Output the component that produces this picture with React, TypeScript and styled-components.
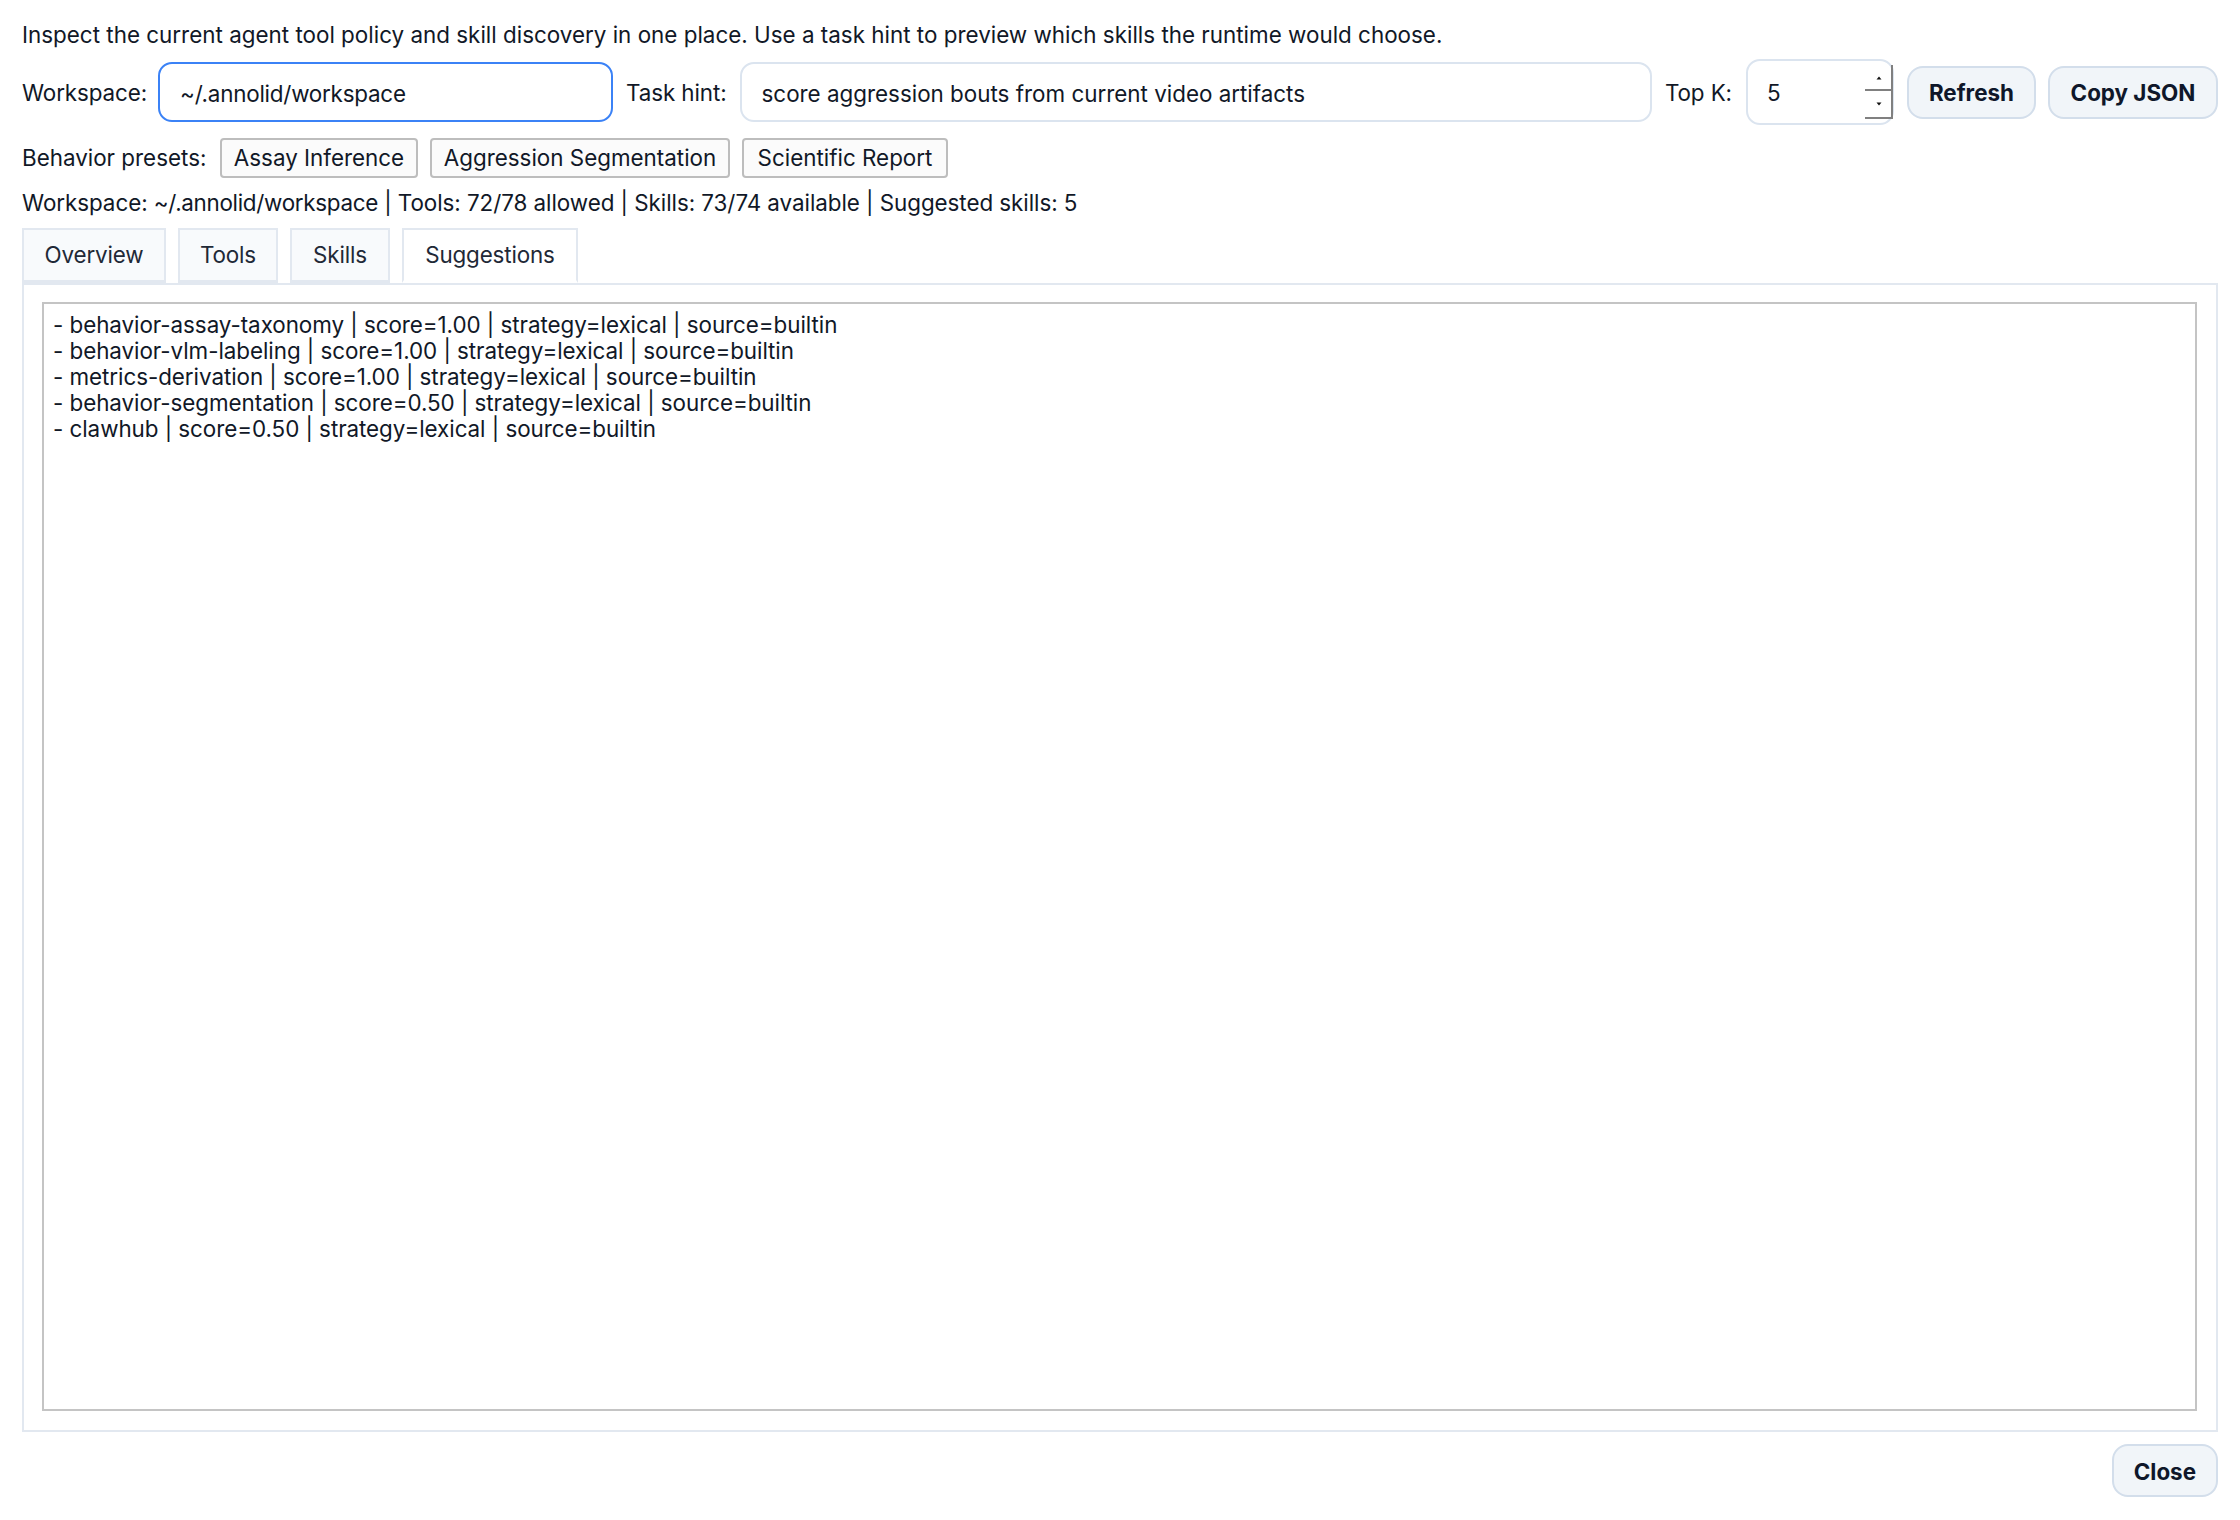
import React from "react";
import styled, { createGlobalStyle } from "styled-components";

const Global = createGlobalStyle`
  html, body { margin: 0; padding: 0; background: #fff; }
  body { font-family: Inter, "Liberation Sans", sans-serif; color: #111827; }
`;

const Page = styled.div`
  width: 2240px;
  height: 1520px;
  box-sizing: border-box;
  padding: 22px 22px 0;
  display: flex;
  flex-direction: column;
  font-size: 22.4px;
  line-height: 26px;
`;

const Intro = styled.div`
  height: 26px;
  white-space: nowrap;
  letter-spacing: 0.01px;
`;

const Toolbar = styled.div`
  display: flex;
  align-items: center;
  height: 66px;
  margin-top: 11px;
`;

const Label = styled.label<{ $gap: number }>`
  margin-right: ${(p) => p.$gap}px;
  padding-top: 2px;
  white-space: nowrap;
  letter-spacing: -0.1px;
`;

const TextField = styled.input<{ $focused?: boolean; $width?: number; $tight?: boolean }>`
  box-sizing: border-box;
  height: 60px;
  width: ${(p) => (p.$width ? `${p.$width}px` : "auto")};
  flex: ${(p) => (p.$width ? "none" : 1)};
  min-width: 0;
  padding: 2px 20px 0;
  font: inherit;
  letter-spacing: ${(p) => (p.$tight ? "-0.22px" : "0")};
  color: #111827;
  background: #fff;
  border: 2px solid ${(p) => (p.$focused ? "#3b82f6" : "#dbe4ef")};
  border-radius: 14px;
  outline: none;
  margin-right: 13px;
`;

const SpinBox = styled.div`
  position: relative;
  box-sizing: border-box;
  width: 148px;
  height: 66px;
  margin-right: 13px;
  flex: none;
  padding: 2px 0 0 19px;
  display: flex;
  align-items: center;
  border: 2px solid #dbe4ef;
  border-radius: 14px;
`;

const Spinner = styled.svg`
  position: absolute;
  right: -1px;
  top: 4px;
  width: 30px;
  height: 54px;
`;

const ActionButton = styled.button`
  box-sizing: border-box;
  height: 53px;
  padding: 2px 20px 0;
  font: inherit;
  font-weight: 700;
  color: #0f172a;
  background: #f1f5f9;
  border: 2px solid #d3deeb;
  border-radius: 16px;
  white-space: nowrap;
`;

const CopyButton = styled(ActionButton)`
  margin-left: 12px;
  width: 170px;
  padding: 2px 0 0;
`;

const PresetRow = styled.div`
  display: flex;
  align-items: center;
  height: 40px;
  margin-top: 13px;
  gap: 12px;
`;

const PresetLabel = styled.span`
  width: 186px;
  white-space: nowrap;
`;

const PresetButton = styled.button<{ $width: number }>`
  box-sizing: border-box;
  width: ${(p) => p.$width}px;
  height: 40px;
  padding: 0;
  font: inherit;
  color: #111827;
  background: #fbfbfb;
  border: 2px solid #bdbdbd;
  border-radius: 4px;
  white-space: nowrap;
`;

const Status = styled.div`
  height: 26px;
  margin-top: 12px;
  white-space: nowrap;
  letter-spacing: -0.05px;
`;

const PathText = styled.span`
  letter-spacing: -0.3px;
`;

const TabBar = styled.div`
  display: flex;
  gap: 12px;
  margin-top: 12px;
  height: 55px;
`;

const Tab = styled.div<{ $active?: boolean; $width: number }>`
  box-sizing: border-box;
  width: ${(p) => p.$width}px;
  height: 55px;
  display: flex;
  align-items: center;
  justify-content: center;
  letter-spacing: -0.15px;
  color: #1f2937;
  background: ${(p) => (p.$active ? "#ffffff" : "#f8fafc")};
  border: 2px solid #e2e8f0;
  border-bottom: 3px solid ${(p) => (p.$active ? "#ffffff" : "#e2e8f0")};
`;

const Pane = styled.div`
  box-sizing: border-box;
  height: 1149px;
  padding: 17px 19px 19px 18px;
  border: 2px solid #e2e8f0;
  display: flex;
`;

const Output = styled.div`
  flex: 1;
  box-sizing: border-box;
  padding: 8px 9px;
  border: 2px solid #c4c4c4;
  white-space: pre;
  letter-spacing: -0.05px;
`;

const Footer = styled.div`
  display: flex;
  justify-content: flex-end;
  margin-top: 12px;
`;

const lines = [
  "- behavior-assay-taxonomy | score=1.00 | strategy=lexical | source=builtin",
  "- behavior-vlm-labeling | score=1.00 | strategy=lexical | source=builtin",
  "- metrics-derivation | score=1.00 | strategy=lexical | source=builtin",
  "- behavior-segmentation | score=0.50 | strategy=lexical | source=builtin",
  "- clawhub | score=0.50 | strategy=lexical | source=builtin",
];

export default function App() {
  return (
    <Page>
      <Global />
      <Intro>
        Inspect the current agent tool policy and skill discovery in one place. Use a task hint to preview which skills the runtime would choose.
      </Intro>
      <Toolbar>
        <Label $gap={11}>Workspace:</Label>
        <TextField $focused $tight $width={455} defaultValue="~/.annolid/workspace" />
        <Label $gap={13}>Task hint:</Label>
        <TextField defaultValue="score aggression bouts from current video artifacts" />
        <Label $gap={14}>Top K:</Label>
        <SpinBox>
          5
          <Spinner viewBox="0 0 30 54">
            <path d="M29 0V54M2 25H29M2 53H29" fill="none" stroke="#808080" strokeWidth="2" />
            <path d="M13.5 14.5l2.5-3 2.5 3z M13.5 37.5l2.5 3 2.5-3z" fill="#111" />
          </Spinner>
        </SpinBox>
        <ActionButton>Refresh</ActionButton>
        <CopyButton>Copy JSON</CopyButton>
      </Toolbar>
      <PresetRow>
        <PresetLabel>Behavior presets:</PresetLabel>
        <PresetButton $width={198}>Assay Inference</PresetButton>
        <PresetButton $width={300}>Aggression Segmentation</PresetButton>
        <PresetButton $width={206}>Scientific Report</PresetButton>
      </PresetRow>
      <Status>
        Workspace: <PathText>~/.annolid/workspace</PathText> | Tools: 72/78 allowed | Skills: 73/74 available | Suggested skills: 5
      </Status>
      <TabBar>
        <Tab $width={144}>Overview</Tab>
        <Tab $width={100}>Tools</Tab>
        <Tab $width={100}>Skills</Tab>
        <Tab $width={176} $active>Suggestions</Tab>
      </TabBar>
      <Pane>
        <Output>{lines.join("\n")}</Output>
      </Pane>
      <Footer>
        <ActionButton>Close</ActionButton>
      </Footer>
    </Page>
  );
}
